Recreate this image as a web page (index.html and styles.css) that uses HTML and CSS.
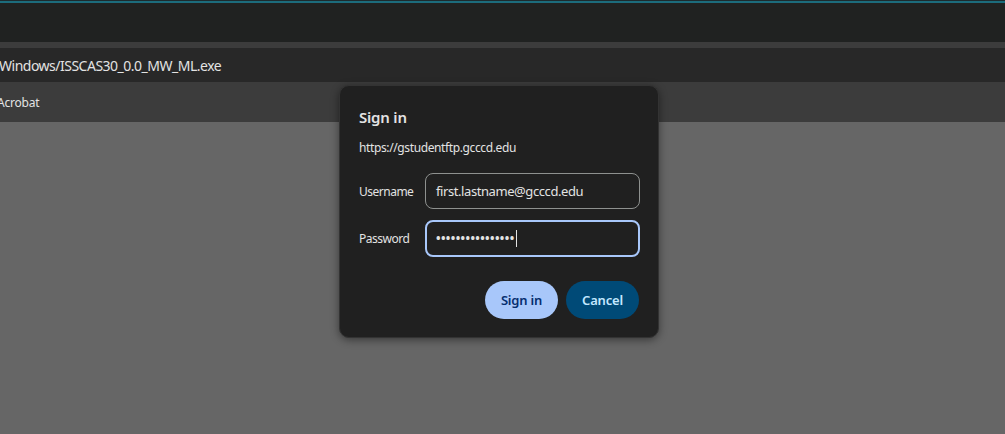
FILE: index.html
```html
<!DOCTYPE html>
<html>
<head>
<meta charset="utf-8">
<link rel="stylesheet" href="styles.css">
</head>
<body>
<div class="browser">
  <div class="accent"></div>
  <div class="tabstrip"></div>
  <div class="divider"></div>
  <div class="addressbar"><span class="url">Windows/ISSCAS30_0.0_MW_ML.exe</span></div>
  <div class="bookmarks"><span class="bookmark">Acrobat</span></div>
  <div class="content"></div>

  <div class="dialog">
    <h1 class="title">Sign in</h1>
    <div class="origin">https://gstudentftp.gcccd.edu</div>
    <div class="fields">
      <label class="label">Username</label>
      <div class="input">first.lastname@gcccd.edu</div>
      <label class="label">Password</label>
      <div class="input focused"><span class="dots">••••••••••••••••</span><span class="caret"></span></div>
    </div>
    <div class="actions">
      <button class="btn primary">Sign in</button>
      <button class="btn secondary">Cancel</button>
    </div>
  </div>
</div>
</body>
</html>
```
FILE: styles.css
```css
* { box-sizing: border-box; }
html, body { margin: 0; padding: 0; height: 100%; }
body {
  font-family: "Noto Sans", "Open Sans", sans-serif;
  background: #666666;
  overflow: hidden;
}
.browser {
  position: relative;
  height: 434px;
  display: flex;
  flex-direction: column;
}
.accent {
  height: 3px;
  border-top: 1px solid #1d2b2e;
  background: #1c6c7c;
}
.tabstrip {
  height: 39px;
  background: #202221;
}
.divider {
  height: 6px;
  background: #3c3c3c;
}
.addressbar {
  height: 34px;
  background: #282828;
  display: flex;
  align-items: center;
}
.url {
  color: #e3e3e3;
  font-size: 14px;
  margin-left: -1px;
  letter-spacing: -0.5px;
}
.bookmarks {
  height: 40px;
  background: #3c3c3c;
  display: flex;
  align-items: center;
}
.bookmark {
  color: #e3e3e3;
  font-size: 12px;
  margin-left: -3px;
  letter-spacing: -0.2px;
}
.content {
  flex: 1;
  background: #666666;
}
.dialog {
  position: absolute;
  left: 339px;
  top: 85px;
  width: 320px;
  height: 253px;
  background: #202020;
  border-radius: 10px;
  border: 1px solid #333;
  box-shadow: 0 2px 8px rgba(0,0,0,0.45);
  padding: 21px 19px 0 19px;
  color: #e3e3e3;
}
.title {
  margin: 0;
  font-size: 15px;
  font-weight: 600;
  line-height: 20px;
  color: #e3e3e3;
  letter-spacing: -0.2px;
}
.origin {
  margin-top: 13px;
  font-size: 12px;
  line-height: 16px;
  letter-spacing: -0.38px;
}
.fields {
  margin-top: 17px;
  display: grid;
  grid-template-columns: 66px 215px;
  row-gap: 11px;
  align-items: center;
}
.label {
  font-size: 12px;
  letter-spacing: -0.5px;
}
.input {
  height: 36px;
  border: 1px solid #8e918f;
  border-radius: 8px;
  display: flex;
  align-items: center;
  padding-left: 10px;
  font-size: 13px;
  letter-spacing: -0.42px;
  color: #e3e3e3;
}
.input.focused {
  border: 2px solid #a8c7fa;
  height: 37px;
  padding-left: 9px;
}
.dots {
  font-size: 12px;
  letter-spacing: 0.4px;
  font-weight: 700;
}
.caret {
  width: 1px;
  height: 17px;
  background: #e3e3e3;
  margin-left: 1px;
}
.actions {
  margin-top: 24px;
  display: flex;
  justify-content: flex-end;
  gap: 8px;
}
.btn {
  height: 38px;
  width: 73px;
  border: none;
  border-radius: 19px;
  font-family: inherit;
  font-size: 13px;
  font-weight: 600;
  letter-spacing: -0.2px;
  padding: 0;
}
.primary {
  background: #a8c7fa;
  color: #062e6f;
}
.secondary {
  background: #004a77;
  color: #c2e7ff;
}
```
